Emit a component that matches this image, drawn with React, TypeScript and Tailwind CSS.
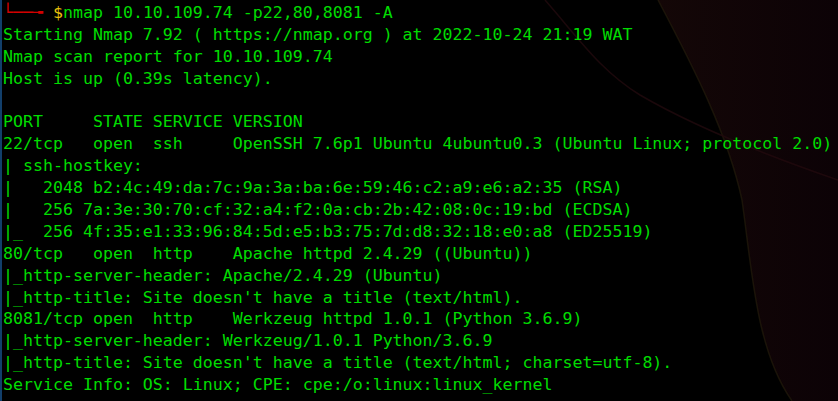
const lines = [
  "Starting Nmap 7.92 ( https://nmap.org ) at 2022-10-24 21:19 WAT",
  "Nmap scan report for 10.10.109.74",
  "Host is up (0.39s latency).",
  "",
  "PORT     STATE SERVICE VERSION",
  "22/tcp   open  ssh     OpenSSH 7.6p1 Ubuntu 4ubuntu0.3 (Ubuntu Linux; protocol 2.0)",
  "| ssh-hostkey: ",
  "|   2048 b2:4c:49:da:7c:9a:3a:ba:6e:59:46:c2:a9:e6:a2:35 (RSA)",
  "|   256 7a:3e:30:70:cf:32:a4:f2:0a:cb:2b:42:08:0c:19:bd (ECDSA)",
  "|_  256 4f:35:e1:33:96:84:5d:e5:b3:75:7d:d8:32:18:e0:a8 (ED25519)",
  "80/tcp   open  http    Apache httpd 2.4.29 ((Ubuntu))",
  "|_http-server-header: Apache/2.4.29 (Ubuntu)",
  "|_http-title: Site doesn't have a title (text/html).",
  "8081/tcp open  http    Werkzeug httpd 1.0.1 (Python 3.6.9)",
  "|_http-server-header: Werkzeug/1.0.1 Python/3.6.9",
  "|_http-title: Site doesn't have a title (text/html; charset=utf-8).",
  "Service Info: OS: Linux; CPE: cpe:/o:linux:linux_kernel",
];

// dark parrot-style wallpaper showing through the terminal
function Wallpaper() {
  return (
    <svg
      className="absolute inset-0 h-full w-full"
      viewBox="0 0 838 401"
      preserveAspectRatio="none"
    >
      <defs>
        <linearGradient id="wall" x1="0" y1="0" x2="1" y2="0">
          <stop offset="0" stopColor="#140707" />
          <stop offset="1" stopColor="#0c0206" />
        </linearGradient>
      </defs>
      <rect width="838" height="401" fill="#000" />
      <path
        d="M658 0 C 695 70, 728 135, 742 200 C 752 270, 756 350, 792 401 L 838 401 L 838 0 Z"
        fill="url(#wall)"
      />
      <path
        d="M658 0 C 695 70, 728 135, 742 200 C 752 270, 756 350, 792 401"
        fill="none"
        stroke="#221b0c"
        strokeWidth="1.5"
        opacity="0.7"
      />
      <path
        d="M545 0 C 580 40, 600 70, 640 95 C 700 130, 780 160, 838 180"
        fill="none"
        stroke="#220a0e"
        strokeWidth="1.5"
        opacity="0.8"
      />
    </svg>
  );
}

export default function App() {
  return (
    <div className="relative w-[838px] h-[401px] overflow-hidden bg-black">
      <Wallpaper />
      <div className="relative flex h-full">
        <div className="w-[2px] h-full bg-[#123f6b]" />
        <div className="pl-[1px] pt-[2px] font-['DejaVu_Sans_Mono',monospace] text-[16.6px] leading-[21.9px] text-[#00dc00] whitespace-pre">
          <div>
            <span className="text-[#d40000]">└──╼ </span>
            <span className="text-[#e8c20c]">$</span>
            <span>nmap 10.10.109.74 -p22,80,8081 -A</span>
          </div>
          {lines.map((l, i) => (
            <div key={i} className="h-[21.9px]">
              {l}
            </div>
          ))}
        </div>
      </div>
    </div>
  );
}
